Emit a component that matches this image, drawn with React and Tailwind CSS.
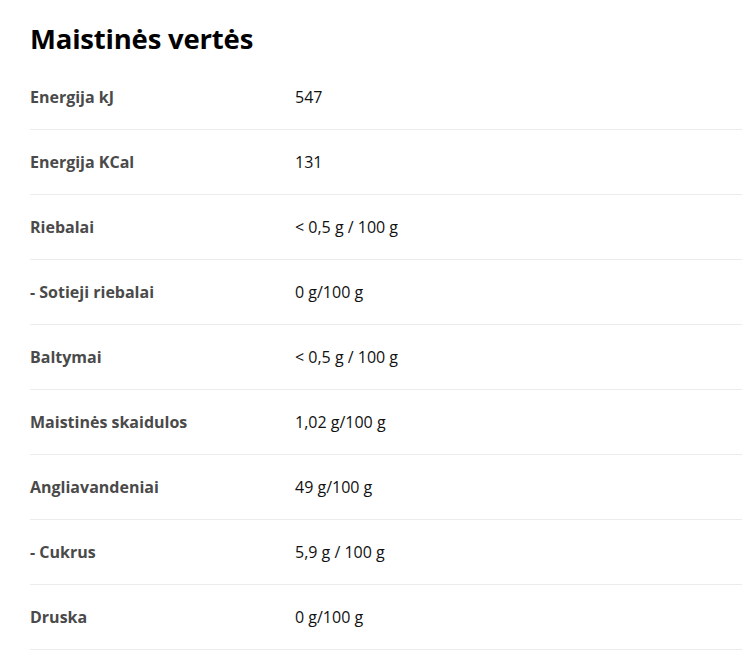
const rows = [
  ["Energija kJ", "547"],
  ["Energija KCal", "131"],
  ["Riebalai", "< 0,5 g / 100 g"],
  ["- Sotieji riebalai", "0 g/100 g"],
  ["Baltymai", "< 0,5 g / 100 g"],
  ["Maistinės skaidulos", "1,02 g/100 g"],
  ["Angliavandeniai", "49 g/100 g"],
  ["- Cukrus", "5,9 g / 100 g"],
  ["Druska", "0 g/100 g"],
];

export default function App() {
  return (
    <div className="min-h-[652px] bg-white pl-[30px] font-['Open_Sans',sans-serif]">
      <h2 className="pt-[21px] text-[27.5px] font-bold leading-[36px] tracking-[-0.2px] text-black">
        Maistinės vertės
      </h2>
      <div className="mt-[8px]">
        {rows.map(([label, value]) => (
          <div key={label} className="flex h-[65px] items-center border-b border-[#ececec]">
            <div className="w-[265px] text-[16px] font-bold text-[#4a4a4a]">{label}</div>
            <div className="text-[16px] text-[#111]">{value}</div>
          </div>
        ))}
      </div>
    </div>
  );
}
